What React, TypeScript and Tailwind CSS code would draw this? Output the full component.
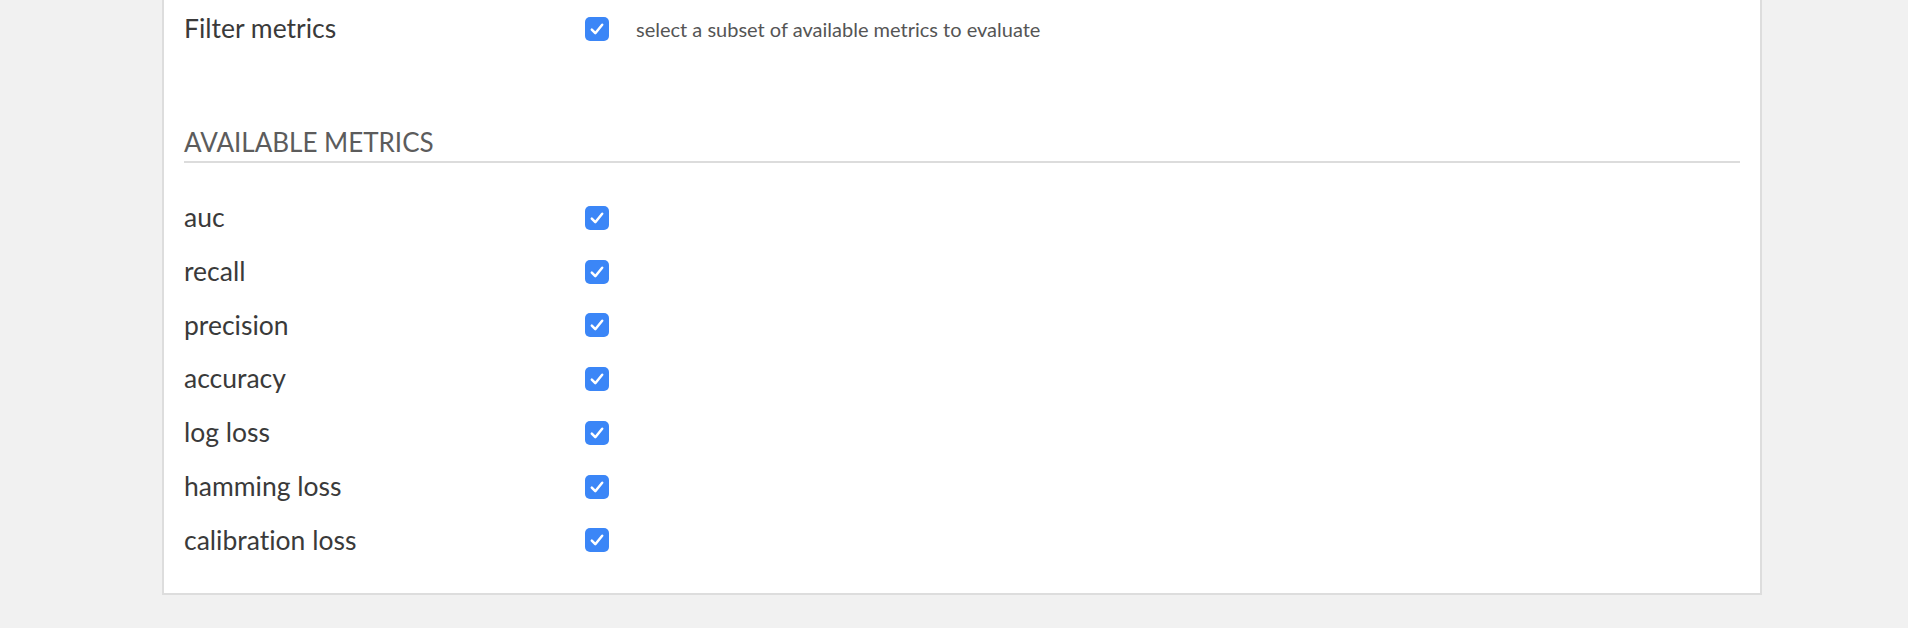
import React from 'react'

const metrics = ['auc', 'recall', 'precision', 'accuracy', 'log loss', 'hamming loss', 'calibration loss']

// Blue checked checkbox, drawn with CSS and a small svg tick
function Checkbox() {
  return (
    <div className="w-[24px] h-[24px] rounded-[5px] bg-[#3b86f7] flex items-center justify-center shrink-0">
      <svg width="16" height="16" viewBox="0 0 16 16" fill="none">
        <path d="M2.8 8.6 L6.3 12.2 L13.2 3.8" stroke="white" strokeWidth="2.5" strokeLinecap="round" strokeLinejoin="round" />
      </svg>
    </div>
  )
}

function Row({ label, children, first = false }: { label: string; children?: React.ReactNode; first?: boolean }) {
  return (
    <div className={`flex items-center ${first ? 'h-[58px]' : 'h-[53.75px]'}`}>
      <div className="w-[401px] text-[26.5px] text-[#3a3a3a]">{label}</div>
      <Checkbox />
      {children}
    </div>
  )
}

export default function App() {
  return (
    <div
      className="min-h-[628px] bg-[#f1f1f1] pb-[33px] [font-variant-ligatures:none]"
      style={{ fontFamily: 'Lato, "Open Sans", sans-serif' }}
    >
      <div className="ml-[162px] w-[1600px] bg-white border-x-2 border-b-2 border-[#dddddd] px-[20px] pb-[26px]">
        {/* Filter toggle */}
        <Row label="Filter metrics" first>
          <span className="ml-[27px] text-[20px] text-[#555555]">select a subset of available metrics to evaluate</span>
        </Row>

        {/* Section heading */}
        <div className="mt-[69px] border-b-2 border-[#dcdcdc] pb-[4px] mb-[28px]">
          <h2 className="text-[26px] leading-[30px] text-[#5c5c5c]">AVAILABLE METRICS</h2>
        </div>

        {metrics.map((m) => (
          <Row key={m} label={m} />
        ))}
      </div>
    </div>
  )
}
